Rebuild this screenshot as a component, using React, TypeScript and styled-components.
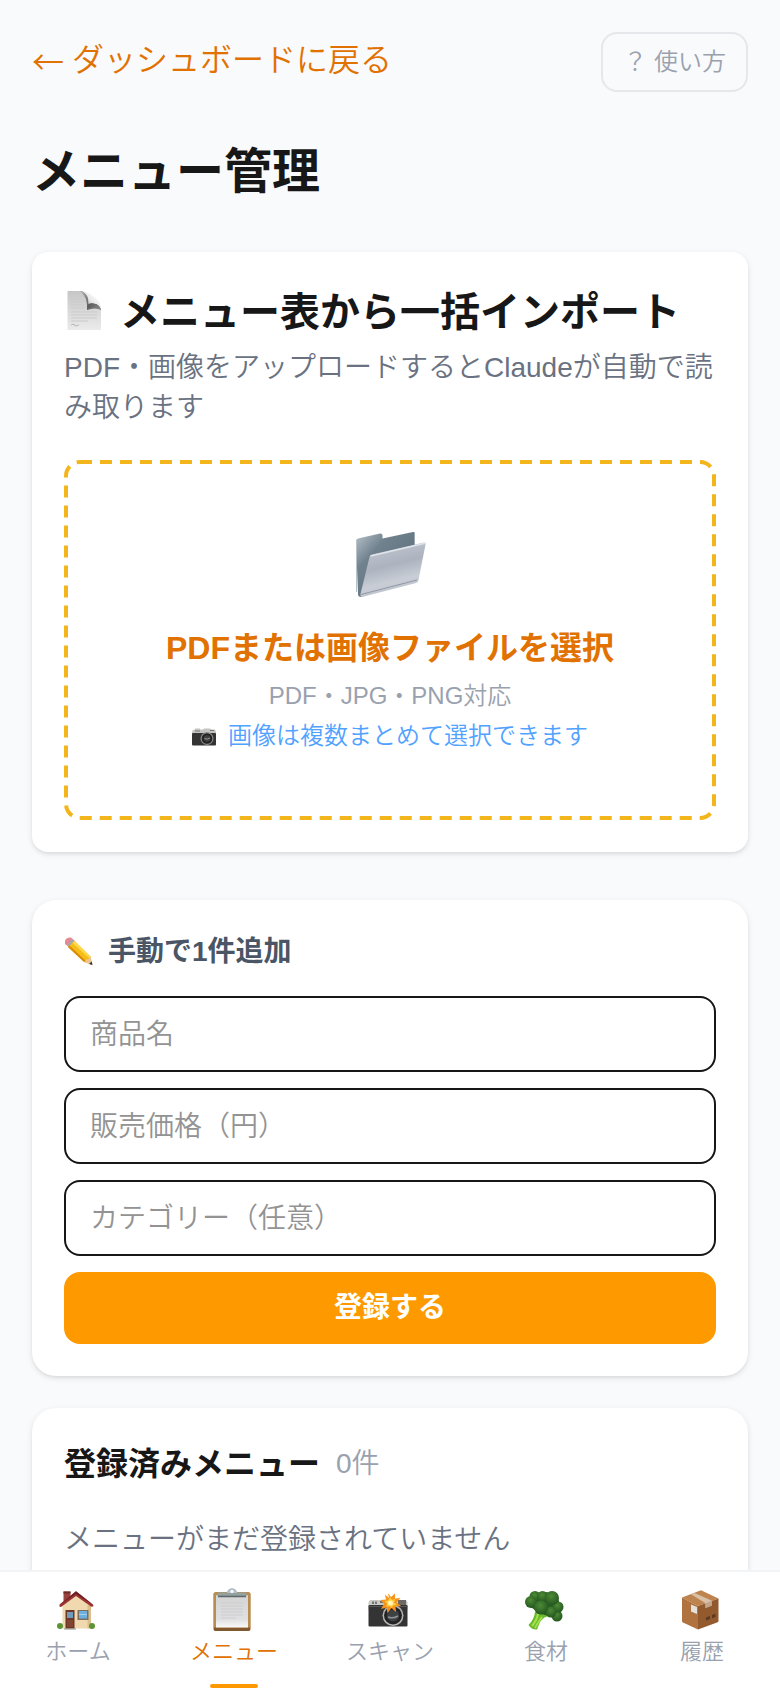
import React, { useState } from 'react';
import styled, { createGlobalStyle } from 'styled-components';

const GlobalStyle = createGlobalStyle`
  * {
    box-sizing: border-box;
  }

  body {
    margin: 0;
    background: #f9fafb;
    color: #171717;
    font-family: 'Liberation Sans', 'Noto Sans CJK JP', sans-serif;
    font-weight: 350;
  }

  h1, h2, p {
    margin: 0;
  }

  button, input {
    font-family: inherit;
    font-weight: inherit;
  }
`;

const Shell = styled.div`
  display: flex;
  flex-direction: column;
  height: 100vh;
`;

const Main = styled.main`
  flex: 1;
  min-height: 0;
  padding: 32px;
  overflow-y: auto;
  scrollbar-width: none;
`;

const TopBar = styled.header`
  display: flex;
  align-items: flex-start;
  justify-content: space-between;
  margin-bottom: 48px;
`;

const BackLink = styled.a`
  display: flex;
  gap: 8px;
  padding-top: 4px;
  color: #e17100;
  font-size: 32px;
  line-height: 48px;
  text-decoration: none;
`;

const BackArrow = styled.span`
  font-family: 'Noto Sans CJK JP', sans-serif;
`;

const HelpButton = styled.button`
  padding: 12px 20px;
  border: 2px solid #e5e7eb;
  border-radius: 16px;
  background: transparent;
  color: #99a1af;
  font-size: 24px;
  line-height: 32px;
  cursor: pointer;
`;

const PageTitle = styled.h1`
  margin-bottom: 48px;
  font-size: 48px;
  font-weight: 700;
  line-height: 64px;
`;

const Card = styled.section<{ $radius: number; $gap: number }>`
  margin-bottom: ${({ $gap }) => $gap}px;
  padding: 32px;
  border-radius: ${({ $radius }) => $radius}px;
  background: #fff;
  box-shadow: 0 2px 6px rgba(0, 0, 0, 0.1), 0 2px 4px -2px rgba(0, 0, 0, 0.1);
`;

const ImportTitle = styled.h2`
  display: flex;
  align-items: center;
  gap: 12px;
  margin-bottom: 8px;
  font-size: 40px;
  font-weight: 700;
  line-height: 56px;
`;

const BodyText = styled.p`
  color: #6a7282;
  font-size: 28px;
  line-height: 40px;
`;

const EmptyText = styled(BodyText)`
  padding-bottom: 32px;
`;

const DropZone = styled.label`
  position: relative;
  display: flex;
  flex-direction: column;
  align-items: center;
  gap: 8px;
  margin-top: 32px;
  padding: 68px;
  cursor: pointer;
`;

const DashedFrame = styled.svg`
  position: absolute;
  inset: 0;
  width: 100%;
  height: 100%;

  rect {
    x: 2px;
    y: 2px;
    width: calc(100% - 4px);
    height: calc(100% - 4px);
    rx: 14px;
    fill: none;
    stroke: #f3b51c;
    stroke-width: 4px;
    stroke-dasharray: 12 8;
  }
`;

const FileInput = styled.input`
  position: absolute;
  width: 1px;
  height: 1px;
  opacity: 0;
`;

const DropTitle = styled.span`
  margin-top: 8px;
  color: #e17100;
  font-size: 32px;
  font-weight: 700;
  line-height: 48px;
`;

const DropNote = styled.span<{ $color: string }>`
  display: flex;
  align-items: center;
  gap: 12px;
  color: ${({ $color }) => $color};
  font-size: 24px;
  line-height: 32px;
`;

const FormTitle = styled.h2`
  display: flex;
  align-items: center;
  gap: 12px;
  margin-bottom: 24px;
  color: #4a5565;
  font-size: 28px;
  font-weight: 700;
  line-height: 40px;
`;

const Form = styled.form`
  display: flex;
  flex-direction: column;
  gap: 16px;
`;

const Field = styled.input`
  width: 100%;
  height: 76px;
  padding: 2px 24px 0;
  border: 2px solid #171717;
  border-radius: 16px;
  background: #fff;
  color: #171717;
  font-size: 28px;

  &::placeholder {
    color: #939393;
    opacity: 1;
  }
`;

const SubmitButton = styled.button`
  padding: 16px;
  border: none;
  border-radius: 16px;
  background: #fe9a00;
  color: #fff;
  font-size: 28px;
  font-weight: 700;
  line-height: 40px;
  cursor: pointer;
`;

const ListHeader = styled.div`
  display: flex;
  align-items: center;
  gap: 16px;
  margin-bottom: 32px;
`;

const ListTitle = styled.h2`
  font-size: 32px;
  font-weight: 700;
  line-height: 48px;
`;

const Count = styled.span`
  color: #99a1af;
  font-size: 28px;
  line-height: 40px;
`;

const Nav = styled.nav`
  display: grid;
  grid-template-columns: repeat(5, 1fr);
  border-top: 2px solid #f3f4f6;
  background: #fff;
`;

const NavLink = styled.a<{ $active: boolean }>`
  display: flex;
  flex-direction: column;
  align-items: center;
  padding-top: 16px;
  color: ${({ $active }) => ($active ? '#e17100' : '#99a1af')};
  font-size: 22px;
  line-height: 32px;
  text-decoration: none;
`;

const NavLabel = styled.span`
  margin-top: 4px;
`;

const NavMarker = styled.span<{ $active: boolean }>`
  width: 48px;
  height: 4px;
  margin-top: 16px;
  border-radius: 2px;
  background: ${({ $active }) => ($active ? '#fe9a00' : 'transparent')};
`;

const DocumentIcon = () => (
  <svg width="44" height="44" viewBox="0 0 44 44" aria-hidden="true">
    <defs>
      <linearGradient id="docPage" x1="0" y1="0" x2="0" y2="1">
        <stop offset="0" stopColor="#c6c6c6" />
        <stop offset="1" stopColor="#ebebeb" />
      </linearGradient>
      <linearGradient id="docShade" x1="0" y1="0" x2="1" y2="1">
        <stop offset="0" stopColor="#b5b5b5" />
        <stop offset="0.6" stopColor="#5e5e5e" />
        <stop offset="1" stopColor="#8f8f8f" />
      </linearGradient>
      <linearGradient id="docCurl" x1="0" y1="1" x2="1" y2="0">
        <stop offset="0" stopColor="#a8a8a8" />
        <stop offset="0.5" stopColor="#ececec" />
        <stop offset="1" stopColor="#ffffff" />
      </linearGradient>
    </defs>
    <path d="M3.500 1H18Q23 2 24 13Q35 13 37 19V40H3.500Z" fill="url(#docPage)" />
    <path d="M16 1H18Q25 4 25 13Q35 12 37 19V20Q31 17 23 20Q24 7 16 1Z" fill="url(#docShade)" />
    <path d="M18 1Q25 4 24.500 14Q32 11 37 18Q36 11 30 7Q24 2 18 1Z" fill="url(#docCurl)" />
    <path
      d="M7 6H17M7 9H19M7 12H20M7 15H20M7 18H21M7 22H33M7 25H33M7 28H33M7 31H24"
      stroke="#cbcbcb"
      strokeWidth="1"
    />
    <path d="M7 35l3-1 1 2 4-1" fill="none" stroke="#b9b9b9" />
  </svg>
);

const FolderIcon = () => (
  <svg width="80" height="80" viewBox="0 0 80 80" aria-hidden="true">
    <defs>
      <linearGradient id="folderBack" x1="0" y1="0" x2="1" y2="1">
        <stop offset="0" stopColor="#b9c4cb" />
        <stop offset="0.3" stopColor="#71828f" />
        <stop offset="1" stopColor="#566774" />
      </linearGradient>
      <linearGradient id="folderFront" x1="0.2" y1="0" x2="0.5" y2="1">
        <stop offset="0" stopColor="#c3c9d2" />
        <stop offset="0.45" stopColor="#acb3bf" />
        <stop offset="0.75" stopColor="#c9ced6" />
        <stop offset="1" stopColor="#b5bbc5" />
      </linearGradient>
    </defs>
    <path
      d="M6 13Q6 11 8 10.500L30 5.500Q32 5 32.500 7V10.500L63 4Q65 3.500 65 6V50L11 69Q8 69 8 66Z"
      fill="url(#folderBack)"
    />
    <path d="M6.500 13V64" stroke="#b9c3ca" strokeWidth="1" />
    <path d="M64.500 5V20" stroke="#9ba8b2" strokeWidth="1" />
    <path
      d="M22 26.500L74 14.500Q76 14.300 75.500 16.500L68.500 52Q68 54.500 66 55L12 69Q10 69 10.500 66L19.500 29Q20 27 22 26.500Z"
      fill="url(#folderFront)"
    />
    <path d="M11 66.500L67 52" stroke="#9299a6" strokeWidth="1" />
    <path d="M20.500 28L75 15.200" stroke="#e1e4e9" strokeWidth="1.500" />
  </svg>
);

const CameraIcon = () => (
  <svg width="24" height="24" viewBox="0 0 24 24" aria-hidden="true">
    <path d="M0 8L1 6L3 5.500V4.500H8V5.500H11L12 4.500H18L19 5.500H23L24 8V11H0Z" fill="#c4c4c2" />
    <path d="M3 7H8M18 6.500H22" stroke="#77746f" />
    <rect y="9" width="24" height="12.500" rx="1" fill="#343434" />
    <circle cx="15" cy="14.500" r="6.500" fill="#8a8a8a" />
    <circle cx="15" cy="14.500" r="5.300" fill="#222" />
    <circle cx="15" cy="14.500" r="3.300" fill="#3f3f3f" />
    <path d="M12.500 14.500Q15 16 18 14" fill="none" stroke="#999" />
  </svg>
);

const PencilIcon = () => (
  <svg width="32" height="32" viewBox="0 0 32 32" aria-hidden="true">
    <path d="M1 5Q2 1 7 1.500L11 5L5 11L1 8Z" fill="#e58a90" />
    <path d="M8 3L12 6.500L6 12L3 9.500Z" fill="#a3a9b2" />
    <path d="M10.500 5L26.500 20.500L28 28.500L20 26L4 11Z" fill="#f5bd16" />
    <path d="M10.500 5L26.500 20.500L25.500 22.500L8.500 7Z" fill="#ffd94a" />
    <path d="M4 11L20 26L22 25L5.500 9.500Z" fill="#d98c0b" />
    <path d="M26.500 20.500L28.500 29L20 26Q22 25 22 23.500Q25 23.500 26.500 20.500Z" fill="#ecc58f" />
    <path d="M27.700 25.500L28.500 29L25 28Z" fill="#38322e" />
  </svg>
);

const HomeIcon = () => (
  <svg width="44" height="44" viewBox="0 0 44 44" aria-hidden="true">
    <rect x="7.500" y="3.500" width="7" height="13" fill="#97423a" />
    <path d="M7.500 3.500H14.500V5.500H7.500Z" fill="#6f2b27" />
    <path d="M6.500 17L20 6L35 17V40.500H6.500Z" fill="#f0d9ae" />
    <path d="M31.500 17H35V40.500H31.500Z" fill="#dabf8d" />
    <path d="M20 3.300L37.500 17Q37.500 19.500 35 18.500L20 8L5 19Q3 19.500 3.500 16.500Z" fill="#9c3434" />
    <path d="M20 3.300L37.500 17L20 6L3.500 17Z" fill="#6d2024" />
    <rect x="9.500" y="22" width="9" height="18.500" fill="#6b3728" />
    <rect x="11" y="24" width="6" height="6" fill="#6e9cba" />
    <path d="M11 32H17V39H11Z" fill="#82452f" />
    <rect x="21.500" y="22" width="11" height="10" fill="#7d6d5c" />
    <rect x="23" y="23" width="8" height="7.500" fill="#6cafe0" />
    <path d="M23 26.500H31" stroke="#a4d0ec" />
    <path d="M8 40.500H20V41.500H8Z" fill="#8c8c88" />
    <circle cx="4" cy="38" r="3" fill="#5c9436" />
    <circle cx="36" cy="38" r="3" fill="#5c9436" />
  </svg>
);

const ClipboardIcon = () => (
  <svg width="44" height="44" viewBox="0 0 44 44" aria-hidden="true">
    <defs>
      <linearGradient id="clipPaper" x1="0" y1="0" x2="0" y2="1">
        <stop offset="0" stopColor="#d4d4d4" />
        <stop offset="0.75" stopColor="#e0e0e2" />
        <stop offset="1" stopColor="#fafafa" />
      </linearGradient>
    </defs>
    <rect x="1.300" y="4" width="37.400" height="39" rx="2.500" fill="#b98c52" />
    <path d="M2 39.500H38V41.500Q38 43 36 43H4Q2 43 2 41.500Z" fill="#82582f" />
    <rect x="4" y="7" width="32" height="32.500" fill="url(#clipPaper)" />
    <path
      d="M9 15H31M9 18H31M9 21H31M9 24H31M9 27H31M9 30H24"
      stroke="#cdcdcf"
      strokeWidth="1"
    />
    <path d="M5 8L6 4.500H15Q16 0.500 20 0.500Q24 0.500 25 4.500H34L35 8Z" fill="#94a19c" />
    <path d="M15 5Q16 0.500 20 0.500Q24 0.500 25 5Z" fill="#b3c2cd" />
    <path d="M6 8.500H34" stroke="#5d676c" strokeWidth="1.500" />
    <circle cx="20" cy="3.500" r="1.500" fill="#fff" />
  </svg>
);

const ScanIcon = () => (
  <svg width="44" height="44" viewBox="0 0 44 44" aria-hidden="true">
    <path d="M0.500 14L2 12H38L39.500 14V22H0.500Z" fill="#c9c9c6" />
    <path d="M5 13.500V16M8 13.500V16M12 14H16" stroke="#5a5a5a" strokeWidth="1.500" />
    <rect x="30" y="12" width="8" height="6" fill="#6d6a66" />
    <rect x="0.500" y="17" width="39" height="21.500" rx="1" fill="#343434" />
    <path d="M0.500 18.500H39.500" stroke="#555" />
    <circle cx="25" cy="27.500" r="10.500" fill="#b5b5b5" />
    <circle cx="25" cy="27.500" r="9" fill="#242424" />
    <circle cx="25" cy="27.500" r="6" fill="#3e4144" />
    <path d="M20 29Q25 31 30 28" fill="none" stroke="#8d9296" strokeWidth="1.500" />
    <path
      d="M20 5L23 9L27 5.500L27 10.500L32.500 10L28.500 14.500L33 18L27.500 18.500L28 24L23.500 20L19.500 25L18.500 19.500L13 21L16 16L12.500 12L18 11.500L17 6.500L21 10Z"
      fill="#f7941d"
    />
    <path
      d="M22 9L24 12L27 11L26 14.500L29 17L25 17.500L24 20L21.500 18L18.500 19L19 15.500L16.500 13L20 12.500Z"
      fill="#ffce3a"
    />
    <circle cx="22.500" cy="15" r="2.500" fill="#fff6b8" />
  </svg>
);

const BroccoliIcon = () => (
  <svg width="44" height="44" viewBox="0 0 44 44" aria-hidden="true">
    <defs>
      <radialGradient id="floret" cx="0.45" cy="0.35" r="0.65">
        <stop offset="0" stopColor="#4d8b35" />
        <stop offset="1" stopColor="#245720" />
      </radialGradient>
    </defs>
    <path d="M4.500 37Q10 32 11 24L22 22L26 28Q20 28 16 34L13 41.500Q8 42 4.500 37Z" fill="#69b92a" />
    <path d="M8 38Q13 32 14 26M11 40Q14 34 18 29" fill="none" stroke="#a4e04e" strokeWidth="2" />
    <path d="M8 8Q20 0 33 8L38 22L33 31L15 25L4 17Z" fill="#285c23" />
    <circle cx="11" cy="8.500" r="5.500" fill="url(#floret)" />
    <circle cx="7" cy="14" r="6" fill="url(#floret)" />
    <circle cx="18.500" cy="8.500" r="5.500" fill="url(#floret)" />
    <circle cx="33" cy="28" r="5.500" fill="url(#floret)" />
    <circle cx="34" cy="19" r="5.500" fill="url(#floret)" />
    <circle cx="28" cy="10" r="7" fill="url(#floret)" />
    <circle cx="27" cy="24" r="5.500" fill="url(#floret)" />
    <circle cx="17" cy="19.500" r="7" fill="url(#floret)" />
  </svg>
);

const PackageIcon = () => (
  <svg width="44" height="44" viewBox="0 0 44 44" aria-hidden="true">
    <path d="M2 9.500L21 2.300L38.500 10.500L18 18Z" fill="#bd844f" />
    <path d="M2 9.500L18 18V41.500L3 34.500Q2 34 2 33Z" fill="#b0723e" />
    <path d="M18 18L38.500 10.500V33Q38.500 34 37 34.500L18 41.500Z" fill="#935a2d" />
    <path d="M11 6.300L14.500 5L32 12.800V17.500L25.500 20V15.300Z" fill="#d9c0a7" />
    <path d="M25.500 15.300L32 12.800V17.500L25.500 20Z" fill="#c2a68b" />
    <path d="M11 16.500L17 19V26L11 23.500Z" fill="#e4e2de" />
    <path d="M26 29.500L30 28V31L26 32.500ZM32 27L35.500 25.800V29L32 30.300Z" fill="#5c3a20" />
  </svg>
);

const navItems = [
  { label: 'ホーム', href: '#home', Icon: HomeIcon },
  { label: 'メニュー', href: '#menu', Icon: ClipboardIcon },
  { label: 'スキャン', href: '#scan', Icon: ScanIcon },
  { label: '食材', href: '#ingredients', Icon: BroccoliIcon },
  { label: '履歴', href: '#history', Icon: PackageIcon },
];

const fields = [
  { name: 'name', placeholder: '商品名', inputMode: 'text' },
  { name: 'price', placeholder: '販売価格（円）', inputMode: 'numeric' },
  { name: 'category', placeholder: 'カテゴリー（任意）', inputMode: 'text' },
] as const;

const MenuPage: React.FC = () => {
  const [values, setValues] = useState({ name: '', price: '', category: '' });

  const handleSubmit = (e: React.FormEvent) => {
    e.preventDefault();
    setValues({ name: '', price: '', category: '' });
  };

  return (
    <Shell>
      <GlobalStyle />
      <Main>
        <TopBar>
          <BackLink href="#dashboard">
            <BackArrow>←</BackArrow>
            ダッシュボードに戻る
          </BackLink>
          <HelpButton type="button">？ 使い方</HelpButton>
        </TopBar>

        <PageTitle>メニュー管理</PageTitle>

        <Card $radius={16} $gap={48}>
          <ImportTitle>
            <DocumentIcon />
            メニュー表から一括インポート
          </ImportTitle>
          <BodyText>PDF・画像をアップロードするとClaudeが自動で読み取ります</BodyText>
          <DropZone>
            <DashedFrame aria-hidden="true">
              <rect />
            </DashedFrame>
            <FileInput type="file" accept=".pdf,image/*" multiple />
            <FolderIcon />
            <DropTitle>PDFまたは画像ファイルを選択</DropTitle>
            <DropNote $color="#99a1af">PDF・JPG・PNG対応</DropNote>
            <DropNote $color="#51a2ff">
              <CameraIcon />
              画像は複数まとめて選択できます
            </DropNote>
          </DropZone>
        </Card>

        <Card $radius={24} $gap={32}>
          <FormTitle>
            <PencilIcon />
            手動で1件追加
          </FormTitle>
          <Form onSubmit={handleSubmit}>
            {fields.map(field => (
              <Field
                key={field.name}
                name={field.name}
                aria-label={field.placeholder}
                placeholder={field.placeholder}
                inputMode={field.inputMode}
                value={values[field.name]}
                onChange={(e) => setValues(prev => ({ ...prev, [field.name]: e.target.value }))}
              />
            ))}
            <SubmitButton type="submit">登録する</SubmitButton>
          </Form>
        </Card>

        <Card $radius={24} $gap={0}>
          <ListHeader>
            <ListTitle>登録済みメニュー</ListTitle>
            <Count>0件</Count>
          </ListHeader>
          <EmptyText>メニューがまだ登録されていません</EmptyText>
        </Card>
      </Main>

      <Nav>
        {navItems.map(({ label, href, Icon }) => (
          <NavLink key={href} href={href} $active={href === '#menu'}>
            <Icon />
            <NavLabel>{label}</NavLabel>
            <NavMarker $active={href === '#menu'} />
          </NavLink>
        ))}
      </Nav>
    </Shell>
  );
};

export default MenuPage;
